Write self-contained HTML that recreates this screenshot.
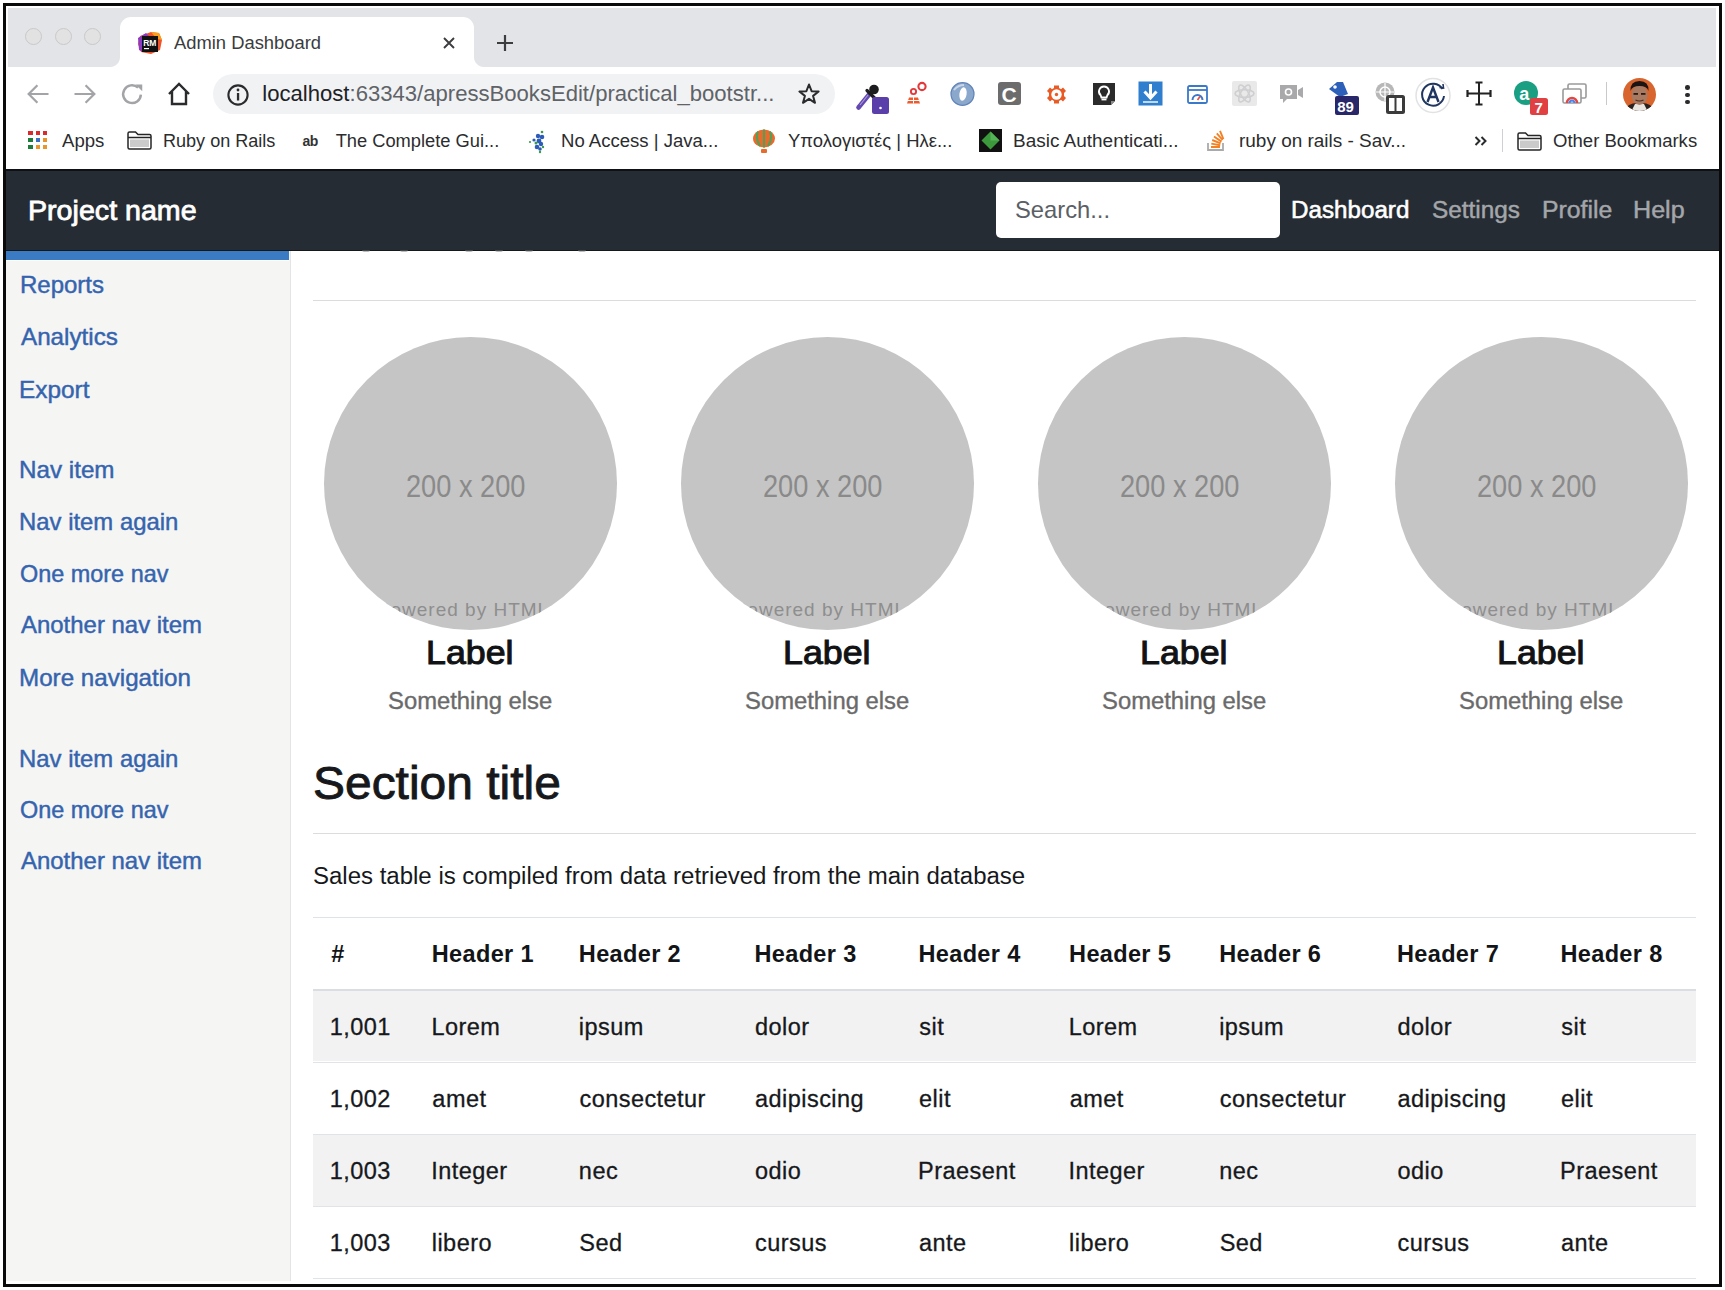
<!DOCTYPE html>
<html><head><meta charset="utf-8"><title>Admin Dashboard</title>
<style>
html,body{margin:0;padding:0;background:#fff}
body{width:1725px;height:1290px;position:relative;overflow:hidden;font-family:"Liberation Sans",sans-serif}
.b{position:absolute;box-sizing:border-box}
.t{position:absolute;white-space:nowrap;transform-origin:0 50%;font-family:"Liberation Sans",sans-serif}
svg.b{overflow:visible}
</style></head><body>
<div class="b" style="left:3.00px;top:3.00px;width:1719.00px;height:1284.00px;border:3px solid #0a0a0a;box-sizing:border-box;background:#fff"></div>
<div class="b" style="left:8.00px;top:8.00px;width:1708.00px;height:59.00px;background:#e3e4e8"></div>
<div class="b" style="left:25.00px;top:27.70px;width:17.40px;height:17.40px;border-radius:50%;background:#e2e2e2;border:1.8px solid #c9c9ca;box-sizing:border-box"></div>
<div class="b" style="left:54.50px;top:27.70px;width:17.40px;height:17.40px;border-radius:50%;background:#e2e2e2;border:1.8px solid #c9c9ca;box-sizing:border-box"></div>
<div class="b" style="left:83.70px;top:27.70px;width:17.40px;height:17.40px;border-radius:50%;background:#e2e2e2;border:1.8px solid #c9c9ca;box-sizing:border-box"></div>
<div class="b" style="left:120.00px;top:17.00px;width:354.00px;height:50.00px;background:#fff;border-radius:11px 11px 0 0"></div>
<div class="b" style="left:110px;top:57px;width:10px;height:10px;background:radial-gradient(circle at 0 0,#e3e4e8 9.5px,#fff 10.5px)"></div>
<div class="b" style="left:474px;top:57px;width:10px;height:10px;background:radial-gradient(circle at 100% 0,#e3e4e8 9.5px,#fff 10.5px)"></div>
<svg class="b" style="left:137px;top:30px" width="26" height="25" viewBox="0 0 26 25">
<path d="M3 6 L14 2 L22 3 L25 10 L23 20 L14 24 L4 22 L1 14 Z" fill="#f0532a"/>
<path d="M1 8 L9 3 L14 8 L6 22 L2 20 Z" fill="#8d3ac0"/>
<path d="M14 2 L22 3 L25 10 L20 9 Z" fill="#f7a11b"/>
<rect x="5" y="6" width="16" height="16" fill="#111"/>
<text x="6.2" y="15.5" font-family="Liberation Sans" font-weight="700" font-size="8.5" fill="#fff">RM</text>
<rect x="7" y="18" width="5" height="1.2" fill="#fff"/>
</svg>
<div class="t" style="left:174.20px;top:33.51px;font-size:18.30px;line-height:18.30px;color:#3b3c3e;transform:scaleX(1.0048);">Admin Dashboard</div>
<svg class="b" style="left:442px;top:36px" width="14" height="14" viewBox="0 0 14 14"><path d="M2 2L12 12M12 2L2 12" stroke="#3d3d3f" stroke-width="1.9"/></svg>
<svg class="b" style="left:495px;top:33px" width="20" height="20" viewBox="0 0 20 20"><path d="M10 2V18M2 10H18" stroke="#3d3d3f" stroke-width="2.2"/></svg>
<svg class="b" style="left:23.5px;top:80px" width="28" height="28" viewBox="0 0 24 24"><path d="M21 12H4M11.5 4.5L4 12L11.5 19.5" fill="none" stroke="#a3a4a7" stroke-width="1.9"/></svg>
<svg class="b" style="left:71px;top:80px" width="28" height="28" viewBox="0 0 24 24"><path d="M3 12H20M12.5 4.5L20 12L12.5 19.5" fill="none" stroke="#a3a4a7" stroke-width="1.9"/></svg>
<svg class="b" style="left:117.5px;top:80px" width="28" height="28" viewBox="0 0 24 24"><path d="M19.6 12.5A7.6 7.6 0 1 1 17.2 6.6" fill="none" stroke="#a3a4a7" stroke-width="2.1"/><path d="M15 3.8H20.8V9.6Z" fill="#a3a4a7"/></svg>
<svg class="b" style="left:166px;top:81px" width="26" height="26" viewBox="0 0 26 26"><path d="M3 13L13 3L23 13M6 10.5V23H20V10.5" fill="none" stroke="#2a2b2d" stroke-width="2.4" stroke-linejoin="miter"/></svg>
<div class="b" style="left:213.00px;top:74.00px;width:622.00px;height:40.00px;background:#f1f2f4;border-radius:20px"></div>
<svg class="b" style="left:226px;top:83px" width="24" height="24" viewBox="0 0 24 24"><circle cx="12" cy="12" r="9.6" fill="none" stroke="#2a2b2d" stroke-width="2.1"/><rect x="10.9" y="10" width="2.3" height="7.5" fill="#2a2b2d"/><circle cx="12" cy="7" r="1.4" fill="#2a2b2d"/></svg>
<div class="t" style="left:262.3px;top:83.29px;font-size:22.1px;line-height:22.1px;color:#5f6368;white-space:nowrap"><span style="color:#202124">localhost</span>:63343/apressBooksEdit/practical_bootstr...</div>
<svg class="b" style="left:797px;top:82px" width="24" height="24" viewBox="0 0 24 24"><path d="M12 2.5L14.6 9.2L21.6 9.5L16.1 13.9L18 20.8L12 16.8L6 20.8L7.9 13.9L2.4 9.5L9.4 9.2Z" fill="none" stroke="#2a2b2d" stroke-width="2" stroke-linejoin="round"/></svg>
<svg class="b" style="left:855px;top:80px" width="36" height="36" viewBox="0 0 36 36">
<path d="M3.5 27.5L14.5 14" stroke="#6248b0" stroke-width="4.6" stroke-linecap="round"/>
<path d="M5 25L13 15" stroke="#a99ad8" stroke-width="1.2"/>
<path d="M12 10.5L19.5 18" stroke="#1d1d1d" stroke-width="3.2" stroke-linecap="round"/>
<circle cx="19" cy="9.5" r="4.8" fill="#1d1d1d"/>
<rect x="17" y="17" width="17" height="17" rx="2.5" fill="#5a3eaa"/>
<circle cx="25.5" cy="28" r="1.3" fill="#fff"/>
</svg>
<svg class="b" style="left:903px;top:80px" width="28" height="26" viewBox="0 0 28 26">
<circle cx="19" cy="6.5" r="3.6" fill="none" stroke="#e23a3a" stroke-width="2.1"/>
<circle cx="10.5" cy="11.5" r="2.6" fill="none" stroke="#e23a3a" stroke-width="1.9"/>
<path d="M10.5 14.5V17M4 23.5L6 17.5H15L17 23.5Z" fill="#ee5a2c"/>
<path d="M10.5 17V23.5M5 20.5H16" stroke="#fff" stroke-width="1"/>
</svg>
<svg class="b" style="left:950px;top:82px" width="26" height="25" viewBox="0 0 26 25">
<ellipse cx="12.5" cy="12" rx="11.5" ry="11.3" fill="#8aa7cc"/>
<ellipse cx="12.5" cy="12" rx="11.5" ry="11.3" fill="none" stroke="#5f83b8" stroke-width="1.2"/>
<ellipse cx="13" cy="12" rx="3.6" ry="6.8" fill="#fff" transform="rotate(8 13 12)"/>
<path d="M4 8Q8 3 14 3" stroke="#c9d6e8" stroke-width="2" fill="none"/>
</svg>
<div class="b" style="left:998.00px;top:82.00px;width:23.00px;height:23.00px;background:#6c6c6c;border-radius:3px"></div>
<div class="t" style="left:1001.5px;top:83.7px;font-size:21px;line-height:21px;color:#fff;font-weight:700">C</div>
<svg class="b" style="left:1047px;top:85px" width="19" height="19" viewBox="0 0 19 19">
<path d="M7 0.5H12V3L14 4.2L16 2.6L19 6L17 8V11L19 13L16 16.4L14 14.8L12 16V18.5H7V16L5 14.8L3 16.4L0 13L2 11V8L0 6L3 2.6L5 4.2L7 3Z" fill="#ea5a24"/>
<circle cx="9.5" cy="9.5" r="5.2" fill="#fff"/>
<circle cx="9.5" cy="9.5" r="1.7" fill="#ea5a24"/>
</svg>
<svg class="b" style="left:1092px;top:82px" width="24" height="24" viewBox="0 0 24 24">
<path d="M1 1H23V19L19 23H1Z" fill="#2b2b2b"/>
<path d="M19 23V19H23Z" fill="#888"/>
<path d="M12 4.5A5 5 0 0 1 15.3 13.3L14.6 15.5H9.4L8.7 13.3A5 5 0 0 1 12 4.5Z" fill="none" stroke="#fff" stroke-width="1.8"/>
<path d="M9.5 17.5H14.5" stroke="#fff" stroke-width="1.8"/>
</svg>
<svg class="b" style="left:1138px;top:81px" width="25" height="25" viewBox="0 0 25 25">
<rect x="0.5" y="0.5" width="24" height="24" fill="#2f7fce"/>
<path d="M12.5 3V16M6.5 10.5L12.5 17L18.5 10.5" fill="none" stroke="#fff" stroke-width="3"/>
<path d="M5 21H20" stroke="#fff" stroke-width="1.4"/>
</svg>
<svg class="b" style="left:1187px;top:85px" width="21" height="19" viewBox="0 0 21 19">
<rect x="1" y="1" width="19" height="17" rx="1.5" fill="none" stroke="#3a78c9" stroke-width="1.8"/>
<path d="M1 5H20" stroke="#3a78c9" stroke-width="1.8"/>
<path d="M5.5 15A5 5 0 0 1 15.5 15" fill="none" stroke="#3a78c9" stroke-width="2"/>
<path d="M10.5 15L13 11.5" stroke="#e84c3d" stroke-width="1.6"/>
</svg>
<svg class="b" style="left:1232px;top:81px" width="25" height="25" viewBox="0 0 25 25">
<rect x="0" y="0" width="25" height="25" rx="2" fill="#e9e9ea"/>
<ellipse cx="12.5" cy="12.5" rx="9.5" ry="3.8" fill="none" stroke="#cfcfd1" stroke-width="1.6"/>
<ellipse cx="12.5" cy="12.5" rx="9.5" ry="3.8" fill="none" stroke="#cfcfd1" stroke-width="1.6" transform="rotate(60 12.5 12.5)"/>
<ellipse cx="12.5" cy="12.5" rx="9.5" ry="3.8" fill="none" stroke="#cfcfd1" stroke-width="1.6" transform="rotate(-60 12.5 12.5)"/>
</svg>
<svg class="b" style="left:1278px;top:83px" width="27" height="22" viewBox="0 0 27 22">
<path d="M2 2H19V16H9L5 20V16H2Z" fill="#a9a9ab"/>
<path d="M20 7L25 4V15L20 12Z" fill="#a9a9ab"/>
<circle cx="10.5" cy="9" r="3" fill="none" stroke="#fff" stroke-width="1.6"/>
</svg>
<svg class="b" style="left:1326px;top:80px" width="35" height="36" viewBox="0 0 35 36">
<path d="M3 9L11 2H17L22 14L14 17Z" fill="#2d60b8"/>
<circle cx="9" cy="7" r="1.8" fill="#fff"/>
<rect x="9" y="16" width="24" height="19" rx="2" fill="#27276a"/>
<text x="11.2" y="31.5" font-family="Liberation Sans" font-weight="700" font-size="15" fill="#fff">89</text>
</svg>
<svg class="b" style="left:1373px;top:80px" width="34" height="36" viewBox="0 0 34 36">
<circle cx="12" cy="12" r="9.5" fill="#b7b7b8"/>
<circle cx="12" cy="12" r="5" fill="none" stroke="#fff" stroke-width="1.5"/>
<path d="M12 3V21M3 12H21" stroke="#fff" stroke-width="1.2"/>
<rect x="13" y="15" width="19" height="19" rx="2.5" fill="#3b3b3b"/>
<rect x="16" y="18" width="13" height="13" fill="#fff"/>
<path d="M22.5 18V31" stroke="#3b3b3b" stroke-width="2"/>
</svg>
<svg class="b" style="left:1411px;top:75px" width="44" height="42" viewBox="0 0 44 42">
<circle cx="22" cy="20.5" r="17" fill="#fff" stroke="#e2e2e4" stroke-width="1.5"/>
<path d="M31.5 14A11 11 0 1 0 33 21" fill="none" stroke="#203660" stroke-width="2"/>
<path d="M28.5 12.5L32.5 13L32 9" fill="none" stroke="#203660" stroke-width="1.6"/>
<path d="M16.5 27L22 12.5L27.5 27M18.5 22H25.5" fill="none" stroke="#203660" stroke-width="2.4"/>
</svg>
<svg class="b" style="left:1466px;top:81px" width="26" height="25" viewBox="0 0 26 25">
<path d="M13 1.5V23.5M1.5 12.5H24.5" stroke="#222" stroke-width="2"/>
<path d="M9.5 1.5H16.5M9.5 23.5H16.5M1.5 9V16M24.5 9V16" stroke="#222" stroke-width="2.2"/>
</svg>
<svg class="b" style="left:1513px;top:80px" width="36" height="36" viewBox="0 0 36 36">
<circle cx="13" cy="13" r="12" fill="#1a9f82"/>
<text x="6.2" y="20" font-family="Liberation Sans" font-weight="700" font-size="18" fill="#fff">a</text>
<rect x="17" y="18" width="18" height="17" rx="2.5" fill="#e04041"/>
<text x="21.5" y="32.5" font-family="Liberation Sans" font-weight="700" font-size="15" fill="#fff">7</text>
</svg>
<svg class="b" style="left:1561px;top:82px" width="26" height="24" viewBox="0 0 26 24">
<rect x="7" y="2" width="18" height="14" rx="1.5" fill="#fff" stroke="#9a9a9c" stroke-width="1.6"/>
<rect x="2" y="7" width="18" height="14" rx="1.5" fill="#fff" stroke="#9a9a9c" stroke-width="1.6"/>
<path d="M6 21A5 5 0 0 1 16 21" fill="none" stroke="#e8453c" stroke-width="2.4"/>
<path d="M8.5 21A2.5 2.5 0 0 1 13.5 21" fill="none" stroke="#4285f4" stroke-width="2"/>
</svg>
<div class="b" style="left:1606.00px;top:82.00px;width:1.40px;height:23.00px;background:#c8c9cc"></div>
<svg class="b" style="left:1622px;top:77px" width="35" height="35" viewBox="0 0 35 35">
<defs><clipPath id="av"><circle cx="17.5" cy="17.5" r="16.5"/></clipPath></defs>
<g clip-path="url(#av)">
<rect width="35" height="35" fill="#d8652e"/>
<path d="M2 35Q5 25 17.5 26Q30 25 33 35Z" fill="#2a2220"/>
<path d="M9 35L13 27H22L26 35Z" fill="#e9e6e2"/>
<ellipse cx="17.5" cy="18" rx="8" ry="10" fill="#a87a62"/>
<path d="M8.5 14Q8 4 17.5 4Q27 4 26.5 14Q25 9 17.5 9Q10 9 8.5 14Z" fill="#1a1414"/>
<rect x="11.5" y="16" width="4.5" height="1.8" fill="#2a1a16"/>
<rect x="19" y="16" width="4.5" height="1.8" fill="#2a1a16"/>
<path d="M13.5 23Q17.5 25 21.5 23" stroke="#4a2a20" stroke-width="1.2" fill="none"/>
</g>
</svg>
<div class="b" style="left:1685.00px;top:85.40px;width:4.60px;height:4.60px;background:#2b2b2d;border-radius:50%"></div>
<div class="b" style="left:1685.00px;top:92.50px;width:4.60px;height:4.60px;background:#2b2b2d;border-radius:50%"></div>
<div class="b" style="left:1685.00px;top:99.60px;width:4.60px;height:4.60px;background:#2b2b2d;border-radius:50%"></div>
<div class="b" style="left:28.30px;top:130.80px;width:4.30px;height:4.30px;background:#d92a2e"></div>
<div class="b" style="left:35.60px;top:130.80px;width:4.30px;height:4.30px;background:#d92a2e"></div>
<div class="b" style="left:42.90px;top:130.80px;width:4.30px;height:4.30px;background:#d92a2e"></div>
<div class="b" style="left:28.30px;top:137.90px;width:4.30px;height:4.30px;background:#1f7d3c"></div>
<div class="b" style="left:35.60px;top:137.90px;width:4.30px;height:4.30px;background:#3b6fc2"></div>
<div class="b" style="left:42.90px;top:137.90px;width:4.30px;height:4.30px;background:#e8922a"></div>
<div class="b" style="left:28.30px;top:145.00px;width:4.30px;height:4.30px;background:#1f7d3c"></div>
<div class="b" style="left:35.60px;top:145.00px;width:4.30px;height:4.30px;background:#eb962b"></div>
<div class="b" style="left:42.90px;top:145.00px;width:4.30px;height:4.30px;background:#eb962b"></div>
<div class="t" style="left:62.30px;top:132.01px;font-size:18.30px;line-height:18.30px;color:#2b2c2e;transform:scaleX(1.0150);">Apps</div>
<svg class="b" style="left:127.3px;top:131.0px" width="25" height="19" viewBox="0 0 25 19">
<path d="M1 2.5Q1 1 2.5 1H8.5L11 3.5H22.5Q24 3.5 24 5V16.5Q24 18 22.5 18H2.5Q1 18 1 16.5Z" fill="#fff" stroke="#262626" stroke-width="1.5"/>
<rect x="3" y="8.5" width="19" height="7.5" fill="#cacaca"/>
<path d="M1 6.5H24" stroke="#262626" stroke-width="1.5"/>
</svg>
<div class="t" style="left:162.55px;top:132.01px;font-size:18.30px;line-height:18.30px;color:#2b2c2e;transform:scaleX(0.9874);">Ruby on Rails</div>
<div class="t" style="left:302.5px;top:133.6px;font-size:14px;line-height:14px;color:#333;font-weight:700;letter-spacing:-0.6px">ab</div>
<div class="t" style="left:335.63px;top:132.01px;font-size:18.30px;line-height:18.30px;color:#2b2c2e;">The Complete Gui...</div>
<svg class="b" style="left:525px;top:128px" width="26" height="26" viewBox="0 0 26 26"><circle cx="17" cy="4" r="1.3" fill="#3b9a4a"/><circle cx="13" cy="8" r="2.2" fill="#2d5bb8"/><circle cx="17" cy="9" r="2.3" fill="#2d5bb8"/><circle cx="9" cy="12" r="1.6" fill="#2d5bb8"/><circle cx="14" cy="13" r="2.4" fill="#2d5bb8"/><circle cx="5" cy="14" r="1.1" fill="#3b9a4a"/><circle cx="11" cy="15" r="1.5" fill="#3b9a4a"/><circle cx="16" cy="16" r="2.2" fill="#2d5bb8"/><circle cx="12" cy="19" r="2.3" fill="#2d5bb8"/><circle cx="15" cy="21" r="1.8" fill="#2d5bb8"/><circle cx="18" cy="19" r="1.2" fill="#3b9a4a"/><circle cx="15" cy="24" r="1.2" fill="#3b9a4a"/></svg>
<div class="t" style="left:560.52px;top:132.01px;font-size:18.30px;line-height:18.30px;color:#2b2c2e;transform:scaleX(1.0140);">No Access | Java...</div>
<svg class="b" style="left:751px;top:128px" width="26" height="26" viewBox="0 0 26 26">
<ellipse cx="13" cy="10.5" rx="11" ry="9" fill="#e86a2c"/>
<path d="M13 1.5V19.5M7 3.5Q4 10.5 9 18M19 3.5Q22 10.5 17 18" stroke="#49a35a" stroke-width="2" fill="none"/>
<rect x="10" y="21" width="6" height="4" rx="1" fill="#e86a2c"/>
</svg>
<div class="t" style="left:788.24px;top:132.01px;font-size:18.30px;line-height:18.30px;color:#2b2c2e;transform:scaleX(1.0101);">Υπολογιστές | Ηλε...</div>
<div class="b" style="left:978.50px;top:129.00px;width:23.00px;height:23.00px;background:#111"></div>
<svg class="b" style="left:978.5px;top:129px" width="23" height="23" viewBox="0 0 23 23"><path d="M11.5 2.5L20.5 11.5L11.5 20.5L2.5 11.5Z" fill="#3c9a3c"/><path d="M11.5 2.5L20.5 11.5L11.5 11.5Z" fill="#55b455"/></svg>
<div class="t" style="left:1012.78px;top:132.01px;font-size:18.30px;line-height:18.30px;color:#2b2c2e;transform:scaleX(1.0373);">Basic Authenticati...</div>
<svg class="b" style="left:1206px;top:129px" width="21" height="23" viewBox="0 0 21 23">
<path d="M2 14V21H17V14" fill="none" stroke="#aaa" stroke-width="1.8"/>
<path d="M5 18H14" stroke="#f48024" stroke-width="2"/>
<path d="M5.3 14.6L14.2 16.2M6.2 11L14.6 14.3M8 7.5L15.5 12.6M10.8 4.3L16.6 11M14 1.8L17.4 10" stroke="#f48024" stroke-width="1.9"/>
</svg>
<div class="t" style="left:1238.77px;top:132.01px;font-size:18.30px;line-height:18.30px;color:#2b2c2e;transform:scaleX(1.0367);">ruby on rails - Sav...</div>
<svg class="b" style="left:1474px;top:135px" width="14" height="12" viewBox="0 0 14 12"><path d="M1.5 2L5.5 6L1.5 10M7.5 2L11.5 6L7.5 10" fill="none" stroke="#2b2c2e" stroke-width="2"/></svg>
<div class="b" style="left:1501.60px;top:129.00px;width:1.40px;height:23.00px;background:#cfd0d3"></div>
<svg class="b" style="left:1517.0px;top:131.5px" width="25" height="19" viewBox="0 0 25 19">
<path d="M1 2.5Q1 1 2.5 1H8.5L11 3.5H22.5Q24 3.5 24 5V16.5Q24 18 22.5 18H2.5Q1 18 1 16.5Z" fill="#fff" stroke="#262626" stroke-width="1.5"/>
<rect x="3" y="8.5" width="19" height="7.5" fill="#cacaca"/>
<path d="M1 6.5H24" stroke="#262626" stroke-width="1.5"/>
</svg>
<div class="t" style="left:1552.97px;top:132.01px;font-size:18.30px;line-height:18.30px;color:#2b2c2e;transform:scaleX(1.0134);">Other Bookmarks</div>
<div class="b" style="left:6.00px;top:168.60px;width:1713.00px;height:81.90px;background:#262c33"></div>
<div class="b" style="left:6.00px;top:168.60px;width:1713.00px;height:2.40px;background:#0e1115"></div>
<div class="b" style="left:6.00px;top:249.60px;width:1713.00px;height:1.00px;background:#15181b"></div>
<div class="t" style="left:28.31px;top:196.59px;font-size:28.00px;line-height:28.00px;color:#ffffff;transform:scaleX(1.0222);-webkit-text-stroke:0.80px #ffffff;">Project name</div>
<div class="b" style="left:996.00px;top:182.30px;width:284.00px;height:56.20px;background:#fff;border-radius:5px"></div>
<div class="t" style="left:1015.13px;top:199.36px;font-size:23.20px;line-height:23.20px;color:#5a6066;transform:scaleX(1.0238);">Search...</div>
<div class="t" style="left:1290.66px;top:198.90px;font-size:23.50px;line-height:23.50px;color:#ffffff;transform:scaleX(1.0295);-webkit-text-stroke:0.55px #ffffff;">Dashboard</div>
<div class="t" style="left:1431.60px;top:198.90px;font-size:23.50px;line-height:23.50px;color:#a3a6aa;transform:scaleX(1.0364);-webkit-text-stroke:0.45px #a3a6aa;">Settings</div>
<div class="t" style="left:1541.72px;top:198.90px;font-size:23.50px;line-height:23.50px;color:#a3a6aa;transform:scaleX(1.0536);-webkit-text-stroke:0.45px #a3a6aa;">Profile</div>
<div class="t" style="left:1632.99px;top:198.90px;font-size:23.50px;line-height:23.50px;color:#a3a6aa;transform:scaleX(1.0688);-webkit-text-stroke:0.45px #a3a6aa;">Help</div>
<div class="b" style="left:6.00px;top:250.50px;width:285.30px;height:1030.70px;background:#f5f5f4;border-right:1.3px solid #e4e4e4"></div>
<div class="b" style="left:6.00px;top:250.50px;width:283.30px;height:9.20px;background:#3b7bc3"></div>
<div class="b" style="left:6.00px;top:259.70px;width:283.00px;height:1.50px;background:#fdfdfd"></div>
<div class="t" style="left:19.98px;top:273.48px;font-size:24.00px;line-height:24.00px;color:#3564ae;-webkit-text-stroke:0.45px #3564ae;">Reports</div>
<div class="t" style="left:20.90px;top:324.68px;font-size:24.00px;line-height:24.00px;color:#3564ae;transform:scaleX(1.0088);-webkit-text-stroke:0.45px #3564ae;">Analytics</div>
<div class="t" style="left:19.45px;top:377.98px;font-size:24.00px;line-height:24.00px;color:#3564ae;transform:scaleX(1.0164);-webkit-text-stroke:0.45px #3564ae;">Export</div>
<div class="t" style="left:19.26px;top:458.28px;font-size:24.00px;line-height:24.00px;color:#3564ae;transform:scaleX(1.0088);-webkit-text-stroke:0.45px #3564ae;">Nav item</div>
<div class="t" style="left:19.29px;top:510.18px;font-size:24.00px;line-height:24.00px;color:#3564ae;transform:scaleX(0.9955);-webkit-text-stroke:0.45px #3564ae;">Nav item again</div>
<div class="t" style="left:20.15px;top:561.68px;font-size:24.00px;line-height:24.00px;color:#3564ae;transform:scaleX(0.9759);-webkit-text-stroke:0.45px #3564ae;">One more nav</div>
<div class="t" style="left:21.20px;top:612.98px;font-size:24.00px;line-height:24.00px;color:#3564ae;transform:scaleX(0.9979);-webkit-text-stroke:0.45px #3564ae;">Another nav item</div>
<div class="t" style="left:19.27px;top:665.98px;font-size:24.00px;line-height:24.00px;color:#3564ae;transform:scaleX(1.0073);-webkit-text-stroke:0.45px #3564ae;">More navigation</div>
<div class="t" style="left:19.29px;top:747.18px;font-size:24.00px;line-height:24.00px;color:#3564ae;transform:scaleX(0.9955);-webkit-text-stroke:0.45px #3564ae;">Nav item again</div>
<div class="t" style="left:20.15px;top:798.08px;font-size:24.00px;line-height:24.00px;color:#3564ae;transform:scaleX(0.9759);-webkit-text-stroke:0.45px #3564ae;">One more nav</div>
<div class="t" style="left:21.20px;top:849.48px;font-size:24.00px;line-height:24.00px;color:#3564ae;transform:scaleX(0.9979);-webkit-text-stroke:0.45px #3564ae;">Another nav item</div>
<div class="b" style="left:362.00px;top:250.30px;width:8.00px;height:1.30px;background:#777;border-radius:0 0 4px 4px;opacity:.5"></div>
<div class="b" style="left:400.00px;top:250.30px;width:8.00px;height:1.30px;background:#777;border-radius:0 0 4px 4px;opacity:.5"></div>
<div class="b" style="left:465.00px;top:250.30px;width:8.00px;height:1.30px;background:#777;border-radius:0 0 4px 4px;opacity:.5"></div>
<div class="b" style="left:495.00px;top:250.30px;width:8.00px;height:1.30px;background:#777;border-radius:0 0 4px 4px;opacity:.5"></div>
<div class="b" style="left:525.00px;top:250.30px;width:8.00px;height:1.30px;background:#777;border-radius:0 0 4px 4px;opacity:.5"></div>
<div class="b" style="left:578.00px;top:250.30px;width:8.00px;height:1.30px;background:#777;border-radius:0 0 4px 4px;opacity:.5"></div>
<div class="b" style="left:313.00px;top:299.60px;width:1383.00px;height:1.60px;background:#dcdcdc"></div>
<div class="b" style="left:323.8px;top:336.5px;width:293px;height:293px;border-radius:50%;background:#c5c5c5;overflow:hidden"><div class="t" style="left:53.0px;top:263.1px;font-size:19px;line-height:19px;color:#8e8e8e;letter-spacing:1px">Powered by HTML.COM</div></div>
<div class="t" style="left:406.44px;top:469.91px;font-size:32.00px;line-height:32.00px;color:#8a8a8a;transform:scaleX(0.8493);">200 x 200</div>
<div class="t" style="left:426.29px;top:636.60px;font-size:32.60px;line-height:32.60px;color:#111214;transform:scaleX(1.0976);-webkit-text-stroke:1.00px #111214;">Label</div>
<div class="t" style="left:388.23px;top:689.60px;font-size:23.50px;line-height:23.50px;color:#6a6a6a;transform:scaleX(1.0138);-webkit-text-stroke:0.35px #6a6a6a;">Something else</div>
<div class="b" style="left:680.7px;top:336.5px;width:293px;height:293px;border-radius:50%;background:#c5c5c5;overflow:hidden"><div class="t" style="left:53.0px;top:263.1px;font-size:19px;line-height:19px;color:#8e8e8e;letter-spacing:1px">Powered by HTML.COM</div></div>
<div class="t" style="left:763.34px;top:469.91px;font-size:32.00px;line-height:32.00px;color:#8a8a8a;transform:scaleX(0.8493);">200 x 200</div>
<div class="t" style="left:783.19px;top:636.60px;font-size:32.60px;line-height:32.60px;color:#111214;transform:scaleX(1.0976);-webkit-text-stroke:1.00px #111214;">Label</div>
<div class="t" style="left:745.13px;top:689.60px;font-size:23.50px;line-height:23.50px;color:#6a6a6a;transform:scaleX(1.0138);-webkit-text-stroke:0.35px #6a6a6a;">Something else</div>
<div class="b" style="left:1037.6px;top:336.5px;width:293px;height:293px;border-radius:50%;background:#c5c5c5;overflow:hidden"><div class="t" style="left:53.0px;top:263.1px;font-size:19px;line-height:19px;color:#8e8e8e;letter-spacing:1px">Powered by HTML.COM</div></div>
<div class="t" style="left:1120.24px;top:469.91px;font-size:32.00px;line-height:32.00px;color:#8a8a8a;transform:scaleX(0.8493);">200 x 200</div>
<div class="t" style="left:1140.09px;top:636.60px;font-size:32.60px;line-height:32.60px;color:#111214;transform:scaleX(1.0976);-webkit-text-stroke:1.00px #111214;">Label</div>
<div class="t" style="left:1102.03px;top:689.60px;font-size:23.50px;line-height:23.50px;color:#6a6a6a;transform:scaleX(1.0138);-webkit-text-stroke:0.35px #6a6a6a;">Something else</div>
<div class="b" style="left:1394.5px;top:336.5px;width:293px;height:293px;border-radius:50%;background:#c5c5c5;overflow:hidden"><div class="t" style="left:53.0px;top:263.1px;font-size:19px;line-height:19px;color:#8e8e8e;letter-spacing:1px">Powered by HTML.COM</div></div>
<div class="t" style="left:1477.14px;top:469.91px;font-size:32.00px;line-height:32.00px;color:#8a8a8a;transform:scaleX(0.8493);">200 x 200</div>
<div class="t" style="left:1496.99px;top:636.60px;font-size:32.60px;line-height:32.60px;color:#111214;transform:scaleX(1.0976);-webkit-text-stroke:1.00px #111214;">Label</div>
<div class="t" style="left:1458.93px;top:689.60px;font-size:23.50px;line-height:23.50px;color:#6a6a6a;transform:scaleX(1.0138);-webkit-text-stroke:0.35px #6a6a6a;">Something else</div>
<div class="t" style="left:312.84px;top:759.01px;font-size:47.00px;line-height:47.00px;color:#16181b;transform:scaleX(1.0199);-webkit-text-stroke:0.90px #16181b;">Section title</div>
<div class="b" style="left:313.00px;top:832.90px;width:1383.00px;height:1.60px;background:#dcdcdc"></div>
<div class="t" style="left:313.12px;top:865.10px;font-size:23.50px;line-height:23.50px;color:#16181b;transform:scaleX(1.0210);">Sales table is compiled from data retrieved from the main database</div>
<div class="b" style="left:313.00px;top:916.60px;width:1383.00px;height:1.70px;background:#dfe2e6"></div>
<div class="b" style="left:313.00px;top:988.80px;width:1383.00px;height:2.50px;background:#dadde1"></div>
<div class="b" style="left:313.00px;top:991.30px;width:1383.00px;height:70.20px;background:#f2f2f2"></div>
<div class="b" style="left:313.00px;top:1061.50px;width:1383.00px;height:1.50px;background:#e0e3e7"></div>
<div class="b" style="left:313.00px;top:1133.60px;width:1383.00px;height:1.50px;background:#e0e3e7"></div>
<div class="b" style="left:313.00px;top:1135.10px;width:1383.00px;height:70.50px;background:#f2f2f2"></div>
<div class="b" style="left:313.00px;top:1205.60px;width:1383.00px;height:1.50px;background:#e0e3e7"></div>
<div class="b" style="left:313.00px;top:1277.50px;width:1383.00px;height:1.50px;background:#e0e3e7"></div>
<div class="t" style="left:331.15px;top:942.70px;font-size:23.50px;line-height:23.50px;color:#121417;font-weight:700;letter-spacing:0.35px;">#</div>
<div class="t" style="left:431.77px;top:942.70px;font-size:23.50px;line-height:23.50px;color:#121417;font-weight:700;letter-spacing:0.35px;">Header 1</div>
<div class="t" style="left:578.87px;top:942.70px;font-size:23.50px;line-height:23.50px;color:#121417;font-weight:700;letter-spacing:0.35px;">Header 2</div>
<div class="t" style="left:754.47px;top:942.70px;font-size:23.50px;line-height:23.50px;color:#121417;font-weight:700;letter-spacing:0.35px;">Header 3</div>
<div class="t" style="left:918.47px;top:942.70px;font-size:23.50px;line-height:23.50px;color:#121417;font-weight:700;letter-spacing:0.35px;">Header 4</div>
<div class="t" style="left:1069.07px;top:942.70px;font-size:23.50px;line-height:23.50px;color:#121417;font-weight:700;letter-spacing:0.35px;">Header 5</div>
<div class="t" style="left:1219.17px;top:942.70px;font-size:23.50px;line-height:23.50px;color:#121417;font-weight:700;letter-spacing:0.35px;">Header 6</div>
<div class="t" style="left:1396.97px;top:942.70px;font-size:23.50px;line-height:23.50px;color:#121417;font-weight:700;letter-spacing:0.35px;">Header 7</div>
<div class="t" style="left:1560.47px;top:942.70px;font-size:23.50px;line-height:23.50px;color:#121417;font-weight:700;letter-spacing:0.35px;">Header 8</div>
<div class="t" style="left:329.74px;top:1016.10px;font-size:23.50px;line-height:23.50px;color:#16181b;-webkit-text-stroke:0.30px #16181b;letter-spacing:0.45px;">1,001</div>
<div class="t" style="left:431.42px;top:1016.10px;font-size:23.50px;line-height:23.50px;color:#16181b;-webkit-text-stroke:0.30px #16181b;letter-spacing:0.45px;">Lorem</div>
<div class="t" style="left:578.87px;top:1016.10px;font-size:23.50px;line-height:23.50px;color:#16181b;-webkit-text-stroke:0.30px #16181b;letter-spacing:0.45px;">ipsum</div>
<div class="t" style="left:755.06px;top:1016.10px;font-size:23.50px;line-height:23.50px;color:#16181b;-webkit-text-stroke:0.30px #16181b;letter-spacing:0.45px;">dolor</div>
<div class="t" style="left:919.29px;top:1016.10px;font-size:23.50px;line-height:23.50px;color:#16181b;-webkit-text-stroke:0.30px #16181b;letter-spacing:0.45px;">sit</div>
<div class="t" style="left:1068.72px;top:1016.10px;font-size:23.50px;line-height:23.50px;color:#16181b;-webkit-text-stroke:0.30px #16181b;letter-spacing:0.45px;">Lorem</div>
<div class="t" style="left:1219.17px;top:1016.10px;font-size:23.50px;line-height:23.50px;color:#16181b;-webkit-text-stroke:0.30px #16181b;letter-spacing:0.45px;">ipsum</div>
<div class="t" style="left:1397.56px;top:1016.10px;font-size:23.50px;line-height:23.50px;color:#16181b;-webkit-text-stroke:0.30px #16181b;letter-spacing:0.45px;">dolor</div>
<div class="t" style="left:1561.30px;top:1016.10px;font-size:23.50px;line-height:23.50px;color:#16181b;-webkit-text-stroke:0.30px #16181b;letter-spacing:0.45px;">sit</div>
<div class="t" style="left:329.74px;top:1088.30px;font-size:23.50px;line-height:23.50px;color:#16181b;-webkit-text-stroke:0.30px #16181b;letter-spacing:0.45px;">1,002</div>
<div class="t" style="left:432.36px;top:1088.30px;font-size:23.50px;line-height:23.50px;color:#16181b;-webkit-text-stroke:0.30px #16181b;letter-spacing:0.45px;">amet</div>
<div class="t" style="left:579.46px;top:1088.30px;font-size:23.50px;line-height:23.50px;color:#16181b;-webkit-text-stroke:0.30px #16181b;letter-spacing:0.45px;">consectetur</div>
<div class="t" style="left:755.06px;top:1088.30px;font-size:23.50px;line-height:23.50px;color:#16181b;-webkit-text-stroke:0.30px #16181b;letter-spacing:0.45px;">adipiscing</div>
<div class="t" style="left:919.06px;top:1088.30px;font-size:23.50px;line-height:23.50px;color:#16181b;-webkit-text-stroke:0.30px #16181b;letter-spacing:0.45px;">elit</div>
<div class="t" style="left:1069.66px;top:1088.30px;font-size:23.50px;line-height:23.50px;color:#16181b;-webkit-text-stroke:0.30px #16181b;letter-spacing:0.45px;">amet</div>
<div class="t" style="left:1219.76px;top:1088.30px;font-size:23.50px;line-height:23.50px;color:#16181b;-webkit-text-stroke:0.30px #16181b;letter-spacing:0.45px;">consectetur</div>
<div class="t" style="left:1397.56px;top:1088.30px;font-size:23.50px;line-height:23.50px;color:#16181b;-webkit-text-stroke:0.30px #16181b;letter-spacing:0.45px;">adipiscing</div>
<div class="t" style="left:1561.06px;top:1088.30px;font-size:23.50px;line-height:23.50px;color:#16181b;-webkit-text-stroke:0.30px #16181b;letter-spacing:0.45px;">elit</div>
<div class="t" style="left:329.74px;top:1160.10px;font-size:23.50px;line-height:23.50px;color:#16181b;-webkit-text-stroke:0.30px #16181b;letter-spacing:0.45px;">1,003</div>
<div class="t" style="left:431.19px;top:1160.10px;font-size:23.50px;line-height:23.50px;color:#16181b;-webkit-text-stroke:0.30px #16181b;letter-spacing:0.45px;">Integer</div>
<div class="t" style="left:578.87px;top:1160.10px;font-size:23.50px;line-height:23.50px;color:#16181b;-webkit-text-stroke:0.30px #16181b;letter-spacing:0.45px;">nec</div>
<div class="t" style="left:755.06px;top:1160.10px;font-size:23.50px;line-height:23.50px;color:#16181b;-webkit-text-stroke:0.30px #16181b;letter-spacing:0.45px;">odio</div>
<div class="t" style="left:918.12px;top:1160.10px;font-size:23.50px;line-height:23.50px;color:#16181b;-webkit-text-stroke:0.30px #16181b;letter-spacing:0.45px;">Praesent</div>
<div class="t" style="left:1068.48px;top:1160.10px;font-size:23.50px;line-height:23.50px;color:#16181b;-webkit-text-stroke:0.30px #16181b;letter-spacing:0.45px;">Integer</div>
<div class="t" style="left:1219.17px;top:1160.10px;font-size:23.50px;line-height:23.50px;color:#16181b;-webkit-text-stroke:0.30px #16181b;letter-spacing:0.45px;">nec</div>
<div class="t" style="left:1397.56px;top:1160.10px;font-size:23.50px;line-height:23.50px;color:#16181b;-webkit-text-stroke:0.30px #16181b;letter-spacing:0.45px;">odio</div>
<div class="t" style="left:1560.12px;top:1160.10px;font-size:23.50px;line-height:23.50px;color:#16181b;-webkit-text-stroke:0.30px #16181b;letter-spacing:0.45px;">Praesent</div>
<div class="t" style="left:329.74px;top:1232.10px;font-size:23.50px;line-height:23.50px;color:#16181b;-webkit-text-stroke:0.30px #16181b;letter-spacing:0.45px;">1,003</div>
<div class="t" style="left:431.77px;top:1232.10px;font-size:23.50px;line-height:23.50px;color:#16181b;-webkit-text-stroke:0.30px #16181b;letter-spacing:0.45px;">libero</div>
<div class="t" style="left:579.34px;top:1232.10px;font-size:23.50px;line-height:23.50px;color:#16181b;-webkit-text-stroke:0.30px #16181b;letter-spacing:0.45px;">Sed</div>
<div class="t" style="left:755.06px;top:1232.10px;font-size:23.50px;line-height:23.50px;color:#16181b;-webkit-text-stroke:0.30px #16181b;letter-spacing:0.45px;">cursus</div>
<div class="t" style="left:919.06px;top:1232.10px;font-size:23.50px;line-height:23.50px;color:#16181b;-webkit-text-stroke:0.30px #16181b;letter-spacing:0.45px;">ante</div>
<div class="t" style="left:1069.07px;top:1232.10px;font-size:23.50px;line-height:23.50px;color:#16181b;-webkit-text-stroke:0.30px #16181b;letter-spacing:0.45px;">libero</div>
<div class="t" style="left:1219.64px;top:1232.10px;font-size:23.50px;line-height:23.50px;color:#16181b;-webkit-text-stroke:0.30px #16181b;letter-spacing:0.45px;">Sed</div>
<div class="t" style="left:1397.56px;top:1232.10px;font-size:23.50px;line-height:23.50px;color:#16181b;-webkit-text-stroke:0.30px #16181b;letter-spacing:0.45px;">cursus</div>
<div class="t" style="left:1561.06px;top:1232.10px;font-size:23.50px;line-height:23.50px;color:#16181b;-webkit-text-stroke:0.30px #16181b;letter-spacing:0.45px;">ante</div>
</body></html>
